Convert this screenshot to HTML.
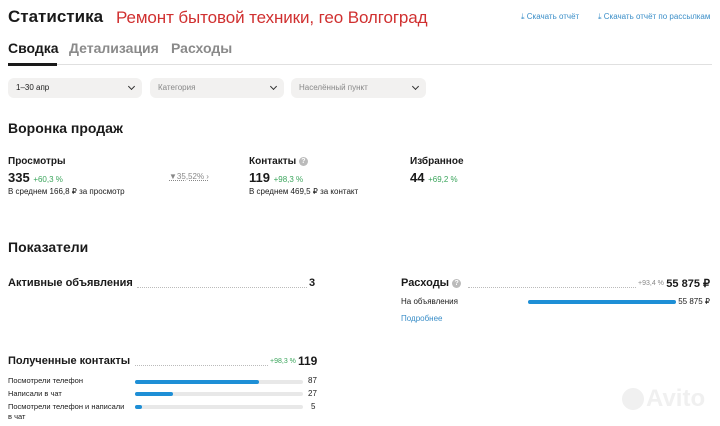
<!DOCTYPE html><html><head><meta charset="utf-8"><style>
body{margin:0;width:720px;height:426px;background:#fff;font-family:"Liberation Sans",sans-serif;color:#1a1a1a;position:relative;overflow:hidden}
.a{position:absolute;white-space:nowrap}
.b{font-weight:bold}
.dd{position:absolute;top:78px;height:20px;background:#f2f1f0;border-radius:6px;font-size:8px;line-height:20px;padding-left:8px;box-sizing:border-box}
.dd::after{content:"";position:absolute;right:8px;top:6px;width:4px;height:4px;border-right:1.3px solid #333;border-bottom:1.3px solid #333;transform:rotate(45deg)}
.g{color:#3ba55c;font-size:8px;font-weight:normal}
.s{font-size:8px}
.dot{position:absolute;height:0;border-bottom:1px dotted #bbb}
.tr{position:absolute;height:4px;background:#e8e8e8;border-radius:2px}
.br{position:absolute;height:4px;background:#1e8fd6;border-radius:2px;left:0;top:0}
.q{display:inline-block;width:9px;height:9px;border-radius:50%;background:#bbb;color:#fff;font-size:7px;line-height:9px;text-align:center;vertical-align:1px}
</style></head><body>
<div class="a b" style="left:8px;top:7px;font-size:17px">Статистика</div>
<div class="a" style="left:116px;top:8px;font-size:17px;color:#d03030;letter-spacing:-0.1px">Ремонт бытовой техники, гео Волгоград</div>
<div class="a" style="left:521px;top:12px;font-size:8px;color:#3a8ec8">⤓ Скачать отчёт</div>
<div class="a" style="left:598px;top:12px;font-size:8px;color:#3a8ec8">⤓ Скачать отчёт по рассылкам</div>
<div class="a b" style="left:8px;top:40px;font-size:14px">Сводка</div>
<div class="a b" style="left:69px;top:40px;font-size:14px;color:#8a8a8a">Детализация</div>
<div class="a b" style="left:171px;top:40px;font-size:14px;color:#8a8a8a">Расходы</div>
<div class="a" style="left:8px;top:64px;width:704px;height:1px;background:#e0e0e0"></div>
<div class="a" style="left:8px;top:63px;width:49px;height:3px;background:#1a1a1a"></div>
<div class="dd" style="left:8px;width:134px">1–30 апр</div>
<div class="dd" style="left:150px;width:134px;color:#888">Категория</div>
<div class="dd" style="left:291px;width:135px;color:#888">Населённый пункт</div>
<div class="a b" style="left:8px;top:120px;font-size:14px">Воронка продаж</div>
<div class="a b" style="left:8px;top:156px;font-size:10px">Просмотры</div>
<div class="a b" style="left:8px;top:170px;font-size:13px">335 <span class="g">+60,3 %</span></div>
<div class="a s" style="left:8px;top:187px">В среднем 166,8 ₽ за просмотр</div>
<div class="a" style="left:169px;top:172px;font-size:8px;color:#888;text-decoration:underline dotted">▼35,52% ›</div>
<div class="a b" style="left:249px;top:156px;font-size:10px">Контакты <span class="q">?</span></div>
<div class="a b" style="left:249px;top:170px;font-size:13px">119 <span class="g">+98,3 %</span></div>
<div class="a s" style="left:249px;top:187px">В среднем 469,5 ₽ за контакт</div>
<div class="a b" style="left:410px;top:156px;font-size:10px">Избранное</div>
<div class="a b" style="left:410px;top:170px;font-size:13px">44 <span class="g">+69,2 %</span></div>
<div class="a b" style="left:8px;top:239px;font-size:14px">Показатели</div>
<div class="a b" style="left:8px;top:277px;font-size:11px">Активные объявления</div>
<div class="dot" style="left:137px;top:287px;width:170px"></div>
<div class="a b" style="left:309px;top:277px;font-size:11px">3</div>
<div class="a b" style="left:401px;top:277px;font-size:11px">Расходы <span class="q">?</span></div>
<div class="dot" style="left:468px;top:287px;width:168px"></div>
<div class="a" style="left:638px;top:280px;font-size:7px;color:#888">+93,4 %</div>
<div class="a b" style="right:10px;top:277px;font-size:11px">55 875 ₽</div>
<div class="a s" style="left:401px;top:297px">На объявления</div>
<div class="tr" style="left:528px;top:300px;width:148px"><div class="br" style="width:148px"></div></div>
<div class="a s" style="right:10px;top:297px">55 875 ₽</div>
<div class="a s" style="left:401px;top:314px;color:#3a8ec8">Подробнее</div>
<div class="a b" style="left:8px;top:355px;font-size:11px">Полученные контакты</div>
<div class="dot" style="left:135px;top:365px;width:133px"></div>
<div class="a" style="left:270px;top:358px;font-size:7px;color:#3ba55c">+98,3 %</div>
<div class="a b" style="left:298px;top:354px;font-size:12px">119</div>
<div class="a" style="left:8px;top:376px;font-size:7.5px">Посмотрели телефон</div>
<div class="tr" style="left:135px;top:380px;width:168px"><div class="br" style="width:124px"></div></div>
<div class="a s" style="left:308px;top:376px">87</div>
<div class="a" style="left:8px;top:389px;font-size:7.5px">Написали в чат</div>
<div class="tr" style="left:135px;top:392px;width:168px"><div class="br" style="width:38px"></div></div>
<div class="a s" style="left:308px;top:389px">27</div>
<div class="a" style="left:8px;top:402px;font-size:7.5px;line-height:10px">Посмотрели телефон и написали<br>в чат</div>
<div class="tr" style="left:135px;top:405px;width:168px"><div class="br" style="width:7px"></div></div>
<div class="a s" style="left:311px;top:402px">5</div>
<div class="a" style="left:622px;top:388px;width:22px;height:22px;border-radius:50%;background:#f0f0f0"></div>
<div class="a b" style="left:646px;top:385px;font-size:24px;color:#f0f0f0">Avito</div>
</body></html>
